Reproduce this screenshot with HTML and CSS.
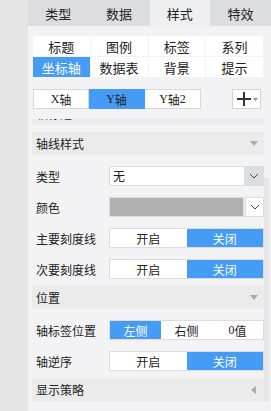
FILE: index.html
```html
<!DOCTYPE html>
<html lang="zh-CN">
<head>
  <meta charset="UTF-8">
  <title>坐标轴样式</title>
  <link rel="stylesheet" href="styles.css">
</head>
<body>
<div class="app">
  <div class="side"></div>
  <div class="panel">
    <div class="tabs">
      <div class="tab">类型</div>
      <div class="tab">数据</div>
      <div class="tab active">样式</div>
      <div class="tab">特效</div>
    </div>

    <div class="subtabs">
      <div class="cell">标题</div>
      <div class="cell">图例</div>
      <div class="cell">标签</div>
      <div class="cell">系列</div>
      <div class="cell active">坐标轴</div>
      <div class="cell">数据表</div>
      <div class="cell">背景</div>
      <div class="cell">提示</div>
    </div>

    <div class="axis-bar">
      <div class="axis-group">
        <div class="axis"><span class="latin">X</span>轴</div>
        <div class="axis active"><span class="latin">Y</span>轴</div>
        <div class="axis"><span class="latin">Y</span>轴<span class="latin">2</span></div>
      </div>
      <div class="add">
        <svg width="27" height="18" viewBox="0 0 27 18">
          <rect x="4" y="8" width="14" height="2" fill="#333"></rect>
          <rect x="10" y="2" width="2" height="14" fill="#333"></rect>
          <polygon points="20,8 25,8 22.5,11" fill="#888"></polygon>
        </svg>
      </div>
    </div>

    <div class="scroll">
      <div class="scroll-inner">
        <div class="section">
          <div class="sec-head"><span>轴标题</span><i class="tri-down"></i></div>
        </div>

        <div class="section">
          <div class="sec-head"><span>轴线样式</span><i class="tri-down"></i></div>
          <div class="row">
            <div class="label">类型</div>
            <div class="select">
              <div class="value">无</div>
              <div class="drop">
                <svg width="10" height="6" viewBox="0 0 10 6"><polyline points="1,1 5,5 9,1" fill="none" stroke="#444" stroke-width="1"></polyline></svg>
              </div>
            </div>
          </div>
          <div class="row">
            <div class="label">颜色</div>
            <div class="color">
              <div class="swatch"></div>
              <div class="drop white">
                <svg width="10" height="6" viewBox="0 0 10 6"><polyline points="1,1 5,5 9,1" fill="none" stroke="#444" stroke-width="1"></polyline></svg>
              </div>
            </div>
          </div>
          <div class="row">
            <div class="label">主要刻度线</div>
            <div class="toggle">
              <div class="opt">开启</div>
              <div class="opt on">关闭</div>
            </div>
          </div>
          <div class="row">
            <div class="label">次要刻度线</div>
            <div class="toggle">
              <div class="opt">开启</div>
              <div class="opt on">关闭</div>
            </div>
          </div>
        </div>

        <div class="section">
          <div class="sec-head"><span>位置</span><i class="tri-down"></i></div>
          <div class="row">
            <div class="label">轴标签位置</div>
            <div class="toggle">
              <div class="opt on">左侧</div>
              <div class="opt">右侧</div>
              <div class="opt"><span class="latin">0</span>值</div>
            </div>
          </div>
          <div class="row">
            <div class="label">轴逆序</div>
            <div class="toggle">
              <div class="opt">开启</div>
              <div class="opt on">关闭</div>
            </div>
          </div>
        </div>

        <div class="section">
          <div class="sec-head"><span>显示策略</span><i class="tri-left"></i></div>
        </div>
      </div>
      <div class="thumb"></div>
    </div>
  </div>
</div>
</body>
</html>
```

FILE: styles.css
```css
body {
  margin: 0;
  padding: 0;
  font-family: "Noto Sans CJK SC", "Noto Sans", sans-serif;
  font-size: 12px;
  color: #222;
  background: #f3f3f5;
}
.app {
  display: flex;
  width: 271px;
  height: 411px;
  overflow: hidden;
}
.side {
  width: 28px;
  flex: none;
  background: #e6e6e6;
}
.panel {
  flex: 1;
  display: flex;
  flex-direction: column;
  background: #f3f3f5;
  min-width: 0;
}
.latin {
  font-family: "Liberation Serif", serif;
}

/* top tabs */
.tabs {
  display: flex;
  height: 26px;
  background: #dcdde1;
}
.tab {
  flex: 1;
  display: flex;
  align-items: center;
  justify-content: center;
  font-size: 13px;
  color: #222;
}
.tab.active {
  background: #eeeff1;
}

/* sub tabs */
.subtabs {
  display: grid;
  grid-template-columns: repeat(4, 1fr);
  gap: 1px;
  width: 230px;
  margin: 10px 0 0 5px;
}
.cell {
  height: 20px;
  background: #fff;
  display: flex;
  align-items: center;
  justify-content: center;
  font-size: 13px;
}
.cell.active {
  background: #449cf5;
  color: #fff;
}

/* axis selector */
.axis-bar {
  display: flex;
  align-items: center;
  justify-content: space-between;
  margin: 12px 10px 0 5px;
}
.axis-group {
  display: flex;
}
.axis {
  width: 56px;
  height: 20px;
  box-sizing: border-box;
  border: 1px solid #d8d8d8;
  background: #fff;
  display: flex;
  align-items: center;
  justify-content: center;
}
.axis + .axis {
  border-left: none;
}
.axis.active {
  background: #449cf5;
  border-color: #449cf5;
}
.add {
  width: 29px;
  height: 20px;
  box-sizing: border-box;
  border: 1px solid #d4d4d4;
  background: #fff;
  display: flex;
  align-items: center;
  justify-content: center;
}

/* scroll area */
.scroll {
  position: relative;
  flex: 1;
  margin-top: 10px;
  overflow: hidden;
}
.scroll-inner {
  margin: -17px 7px 0 4px;
}
.thumb {
  position: absolute;
  left: 236px;
  top: 58px;
  width: 5px;
  height: 225px;
  border-radius: 3px;
  background: #e6e6e8;
}
.section {
  margin-bottom: 7px;
}
.sec-head {
  height: 23px;
  background: #ebebec;
  display: flex;
  align-items: center;
  justify-content: space-between;
  padding: 0 6px 0 4px;
}
.tri-down {
  width: 0;
  height: 0;
  border-left: 4px solid transparent;
  border-right: 4px solid transparent;
  border-top: 5px solid #aaa;
}
.tri-left {
  width: 0;
  height: 0;
  border-top: 4px solid transparent;
  border-bottom: 4px solid transparent;
  border-right: 5px solid #aaa;
  margin-right: 2px;
}
.row {
  display: flex;
  align-items: center;
  margin-top: 11px;
  height: 20px;
}
.label {
  width: 77px;
  box-sizing: border-box;
  padding-left: 4px;
  flex: none;
}
.select, .color, .toggle {
  flex: 1;
  height: 20px;
  box-sizing: border-box;
  display: flex;
}
.select {
  border: 1px solid #dcdcdc;
  background: #fff;
}
.value {
  flex: 1;
  padding-left: 3px;
  line-height: 18px;
}
.drop {
  width: 19px;
  background: #dcdde1;
  display: flex;
  align-items: center;
  justify-content: center;
}
.drop.white {
  background: #fff;
  border: 1px solid #dcdcdc;
  box-sizing: border-box;
  margin-left: 1px;
}
.swatch {
  flex: 1;
  background: #b0b0b0;
  border: 1px solid #dcdcdc;
}
.toggle {
  border: 1px solid #dcdcdc;
  background: #fff;
}
.opt {
  flex: 1;
  display: flex;
  align-items: center;
  justify-content: center;
}
.opt.on {
  background: #449cf5;
  color: #fff;
}
```
